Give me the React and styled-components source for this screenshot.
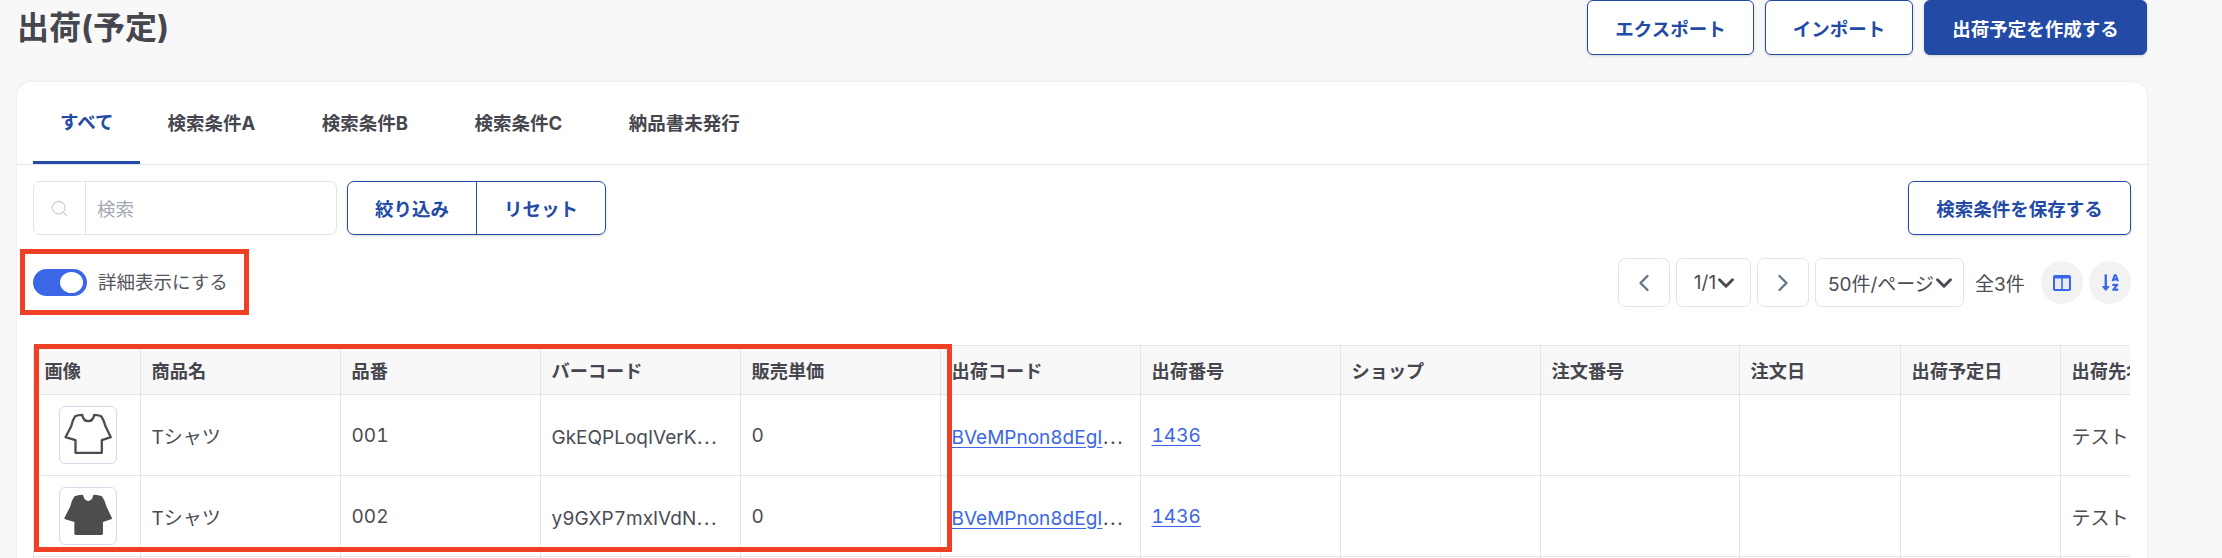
import React from "react";
import styled, { createGlobalStyle } from "styled-components";
import { FaSortAlphaDown } from "react-icons/fa";
import { Search, ChevronLeft, ChevronRight, ChevronDown } from "lucide-react";

const Global = createGlobalStyle`
  html, body { margin: 0; height: 558px; overflow: hidden; background: #f8f8f8; }
  body { font-family: Inter, "Noto Sans CJK JP", sans-serif; color: #45464e; }
  * { box-sizing: border-box; }
`;
const Page = styled.div`position: relative; width: 2222px; height: 558px; overflow: hidden;`;
const Header = styled.header`display: flex; justify-content: space-between; height: 55px; padding: 0 75px 0 17px;`;
const Title = styled.h1`margin: 6px 0 0; font-size: 32px; line-height: 44px; font-weight: 700; color: #45464e;`;
const Actions = styled.div`display: flex; gap: 11px;`;
const Button = styled.button`
  height: ${(p) => p.$h || 55}px; width: ${(p) => p.$w}px; padding: 0; font: 700 18.5px Inter, "Noto Sans CJK JP", sans-serif;
  color: ${(p) => (p.$primary ? "#fff" : "#234ba6")}; background: ${(p) => (p.$primary ? "#234ba6" : "#fff")};
  border: 1.5px solid #234ba6; border-radius: 6px; box-shadow: 0 1px 3px rgba(0,0,0,.16);
`;
const Card = styled.main`margin: 27px 75px 0 17px; height: 600px; background: #fff; border-radius: 14px 14px 0 0; box-shadow: 0 0 3px rgba(0,0,0,.09);`;
const Tabs = styled.nav`display: flex; height: 83px; padding-left: 16px; border-bottom: 1.5px solid #e4e5ea;`;
const Tab = styled.div`
  height: 82px; padding: 0 39.5px 2px 27px; display: flex; align-items: center; font-size: 18.5px; font-weight: 700;
  color: ${(p) => (p.$active ? "#234ba6" : "#45464e")};
  border-bottom: ${(p) => (p.$active ? "3px solid #234ba6" : "none")};
  &:first-child { padding-right: 27px; }
`;
const Body = styled.section`padding: 16px 16px 0 16px;`;
const FilterRow = styled.div`display: flex; align-items: flex-start;`;
const SearchBox = styled.div`width: 304px; height: 54px; display: flex; border: 1.5px solid #e3e4e8; border-radius: 7px; background: #fff;`;
const SearchIconCell = styled.div`width: 52px; display: flex; align-items: center; justify-content: center; color: #c5cbd8; border-right: 1.5px solid #e3e4e8;`;
const Placeholder = styled.div`display: flex; align-items: center; padding-left: 11px; font-size: 18.5px; color: #a4a8b4;`;
const ButtonGroup = styled.div`display: flex; margin-left: 10px; height: 54px; width: 259px; border: 1.5px solid #234ba6; border-radius: 7px; box-shadow: 0 1px 3px rgba(0,0,0,.16);`;
const GroupButton = styled.div`flex: 1; display: flex; align-items: center; justify-content: center; font-size: 18.5px; font-weight: 700; color: #234ba6; & + & { border-left: 1.5px solid #234ba6; }`;
const SaveButton = styled(Button)`margin-left: auto;`;
const ControlRow = styled.div`display: flex; align-items: flex-start; justify-content: space-between; height: 49px; margin-top: 23px;`;
const Switch = styled.div`display: flex; align-items: center; gap: 11px; margin-top: 11px; font-size: 18.5px; line-height: 27px; color: #55565e;`;
const Track = styled.div`width: 54px; height: 27px; padding: 3px 4px; display: flex; justify-content: flex-end; border-radius: 14px; background: #3b66e6;`;
const Knob = styled.div`width: 23px; height: 21px; border-radius: 50%; background: #fff;`;
const Pager = styled.div`display: flex; align-items: flex-start; gap: 6px;`;
const PagerBox = styled.div`
  width: ${(p) => p.$w}px; height: 49px; display: flex; align-items: center; justify-content: center;
  font-size: 19px; color: #4b4c54; border: 1.5px solid #e3e4e8; border-radius: 7px; background: #fff;
`;
const Caret = styled(ChevronDown)`margin: 0 -6px 0 -3px; flex: none;`;
const Total = styled.div`height: 49px; margin: 0 11px 0 5px; display: flex; align-items: center; font-size: 19px; color: #4b4c54; width: 49px; white-space: nowrap;`;
const RoundIcon = styled.div`width: 42px; height: 43px; margin-top: 3px; display: flex; align-items: center; justify-content: center; border-radius: 50%; background: #f2f2f3; color: #3b66e6;`;
const TableWrap = styled.div`width: 2097px; margin-top: 38px; overflow: hidden;`;
const Table = styled.table`width: 2297px; table-layout: fixed; border-collapse: collapse;`;
const Th = styled.th`height: 49px; padding: 0 10.5px; text-align: left; font-size: 18.2px; font-weight: 700; background: #f8f8f8; color: #45464e; border: 1.5px solid #e3e4e8; white-space: nowrap; overflow: hidden;`;
const Td = styled.td`height: 81px; padding: 0 10.5px; font-size: 19px; font-variant-numeric: tabular-nums; color: #4b4c54; border: 1.5px solid #e3e4e8; white-space: nowrap;`;
const ThumbCell = styled(Td)`padding: 0 0 0 24.5px;`;
const Thumb = styled.div`width: 58px; height: 58px; display: flex; border: 1.5px solid #d5dbe6; border-radius: 6px; background: #fff;`;
const Link = styled.a`color: #3b66e6; text-decoration: underline; text-underline-offset: 3px;`;
const Highlight = styled.div`
  position: absolute; left: ${(p) => p.$x}px; top: ${(p) => p.$y}px; width: ${(p) => p.$w}px; height: ${(p) => p.$h}px;
  border: 5px solid #ee4025; pointer-events: none;
`;

const SHIRT = "M23.7 9.3 C24.4 13.4 26.6 15.7 29.7 15.7 C32.8 15.7 35 13.4 35.7 9.3 C38.6 9.3 41 9.8 42.7 10.7 C44.7 13.4 46 17 47 20.7 L52.3 31.7 L43.3 34.7 L43.3 47.3 L17 47.3 L17 34.7 L7 31.7 L12.7 20.7 C13.6 17 14.8 13.4 16.7 10.7 C18.4 9.8 20.8 9.3 23.7 9.3 Z";
const Shirt = ({ filled }) => (
  <svg width="55" height="55" viewBox="1.5 1.5 55 55" aria-hidden="true">
    <path d={SHIRT} fill={filled ? "#4d4d4f" : "#fff"} stroke="#4d4d4f" strokeWidth="2.3" strokeLinejoin="round" />
  </svg>
);
const ColumnsIcon = () => (
  <svg width="18" height="16" viewBox="0 0 18 16" aria-hidden="true">
    <rect width="18" height="16" rx="2" fill="#3b66e6" />
    <rect x="2" y="3.5" width="6.2" height="10.5" fill="#e8edfc" />
    <rect x="9.8" y="3.5" width="6.2" height="10.5" fill="#e8edfc" />
  </svg>
);

const widths = [107, 200, 200, 200, 200, 200, 200, 200, 199, 161, 160, 270];
const heads = ["画像", "商品名", "品番", "バーコード", "販売単価", "出荷コード", "出荷番号", "ショップ", "注文番号", "注文日", "出荷予定日", "出荷先名"];
const rows = [
  { no: "001", bar: "GkEQPLoqIVerK⋯", filled: false },
  { no: "002", bar: "y9GXP7mxIVdN⋯", filled: true },
  { no: "003", bar: "hT3KQm8sWpLx⋯", filled: false },
];

export default function App() {
  return (
    <Page>
      <Global />
      <Header>
        <Title>出荷(予定)</Title>
        <Actions>
          <Button $w={167}>エクスポート</Button>
          <Button $w={148}>インポート</Button>
          <Button $w={223} $primary>出荷予定を作成する</Button>
        </Actions>
      </Header>
      <Card>
        <Tabs>
          <Tab $active>すべて</Tab>
          <Tab>検索条件A</Tab>
          <Tab>検索条件B</Tab>
          <Tab>検索条件C</Tab>
          <Tab>納品書未発行</Tab>
        </Tabs>
        <Body>
          <FilterRow>
            <SearchBox>
              <SearchIconCell><Search size={19} strokeWidth={1.4} /></SearchIconCell>
              <Placeholder>検索</Placeholder>
            </SearchBox>
            <ButtonGroup>
              <GroupButton>絞り込み</GroupButton>
              <GroupButton>リセット</GroupButton>
            </ButtonGroup>
            <SaveButton $w={223} $h={54}>検索条件を保存する</SaveButton>
          </FilterRow>
          <ControlRow>
            <Switch><Track><Knob /></Track>詳細表示にする</Switch>
            <Pager>
              <PagerBox $w={52}><ChevronLeft size={28} color="#64748b" strokeWidth={2} /></PagerBox>
              <PagerBox $w={75}>1/1<Caret size={26} strokeWidth={2.8} /></PagerBox>
              <PagerBox $w={52}><ChevronRight size={28} color="#64748b" strokeWidth={2} /></PagerBox>
              <PagerBox $w={149}>50件/ページ<Caret size={26} strokeWidth={2.8} /></PagerBox>
              <Total>全3件</Total>
              <RoundIcon><ColumnsIcon /></RoundIcon>
              <RoundIcon><FaSortAlphaDown size={19} /></RoundIcon>
            </Pager>
          </ControlRow>
          <TableWrap>
            <Table>
              <colgroup>{widths.map((w, i) => <col key={i} width={w} />)}</colgroup>
              <thead><tr>{heads.map((h) => <Th key={h}>{h}</Th>)}</tr></thead>
              <tbody>
                {rows.map((r) => (
                  <tr key={r.no}>
                    <ThumbCell><Thumb><Shirt filled={r.filled} /></Thumb></ThumbCell>
                    <Td>Tシャツ</Td>
                    <Td>{r.no}</Td>
                    <Td>{r.bar}</Td>
                    <Td>0</Td>
                    <Td><Link>BVeMPnon8dEgI</Link>⋯</Td>
                    <Td><Link>1436</Link></Td>
                    <Td /><Td /><Td /><Td />
                    <Td>テスト</Td>
                  </tr>
                ))}
              </tbody>
            </Table>
          </TableWrap>
        </Body>
      </Card>
      <Highlight $x={20} $y={249} $w={229} $h={66} />
      <Highlight $x={34} $y={344} $w={918} $h={208} />
    </Page>
  );
}
